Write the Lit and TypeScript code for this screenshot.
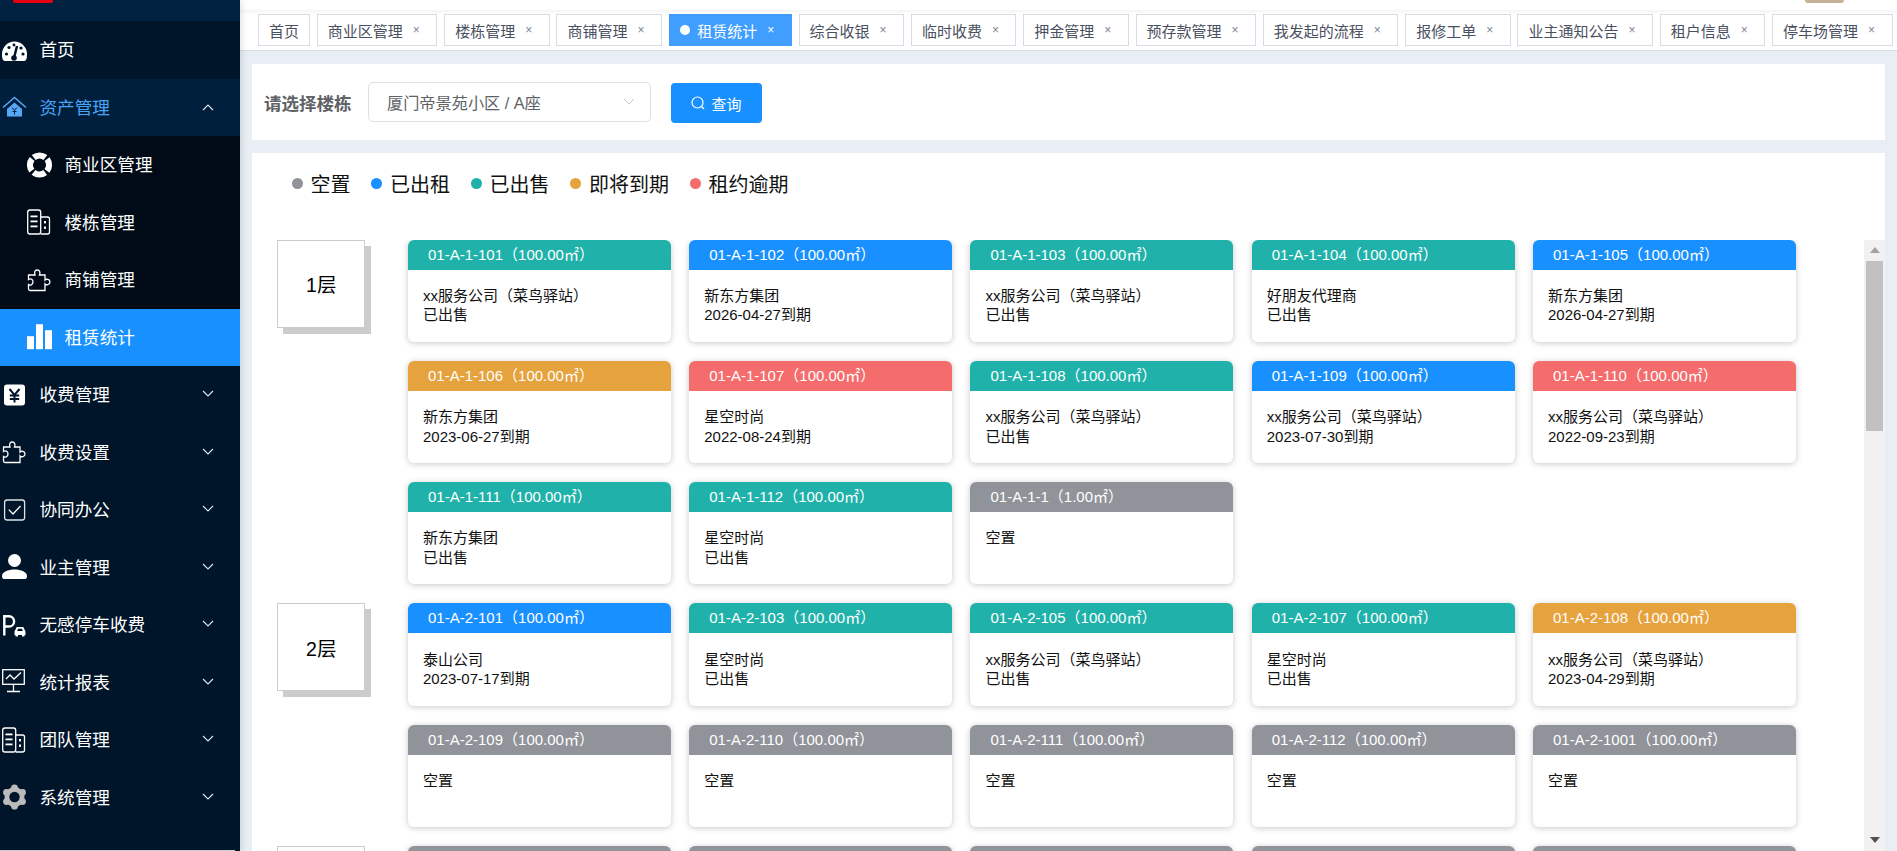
import { LitElement, html, css } from "lit";
import { customElement } from "lit/decorators.js";

const XX = "xx服务公司（菜鸟驿站）";
type C = [string, string, string, string?, string?];
const f1: C[] = [
  ["t", "01-A-1-101", "100.00", XX, "已出售"],
  ["b", "01-A-1-102", "100.00", "新东方集团", "2026-04-27到期"],
  ["t", "01-A-1-103", "100.00", XX, "已出售"],
  ["t", "01-A-1-104", "100.00", "好朋友代理商", "已出售"],
  ["b", "01-A-1-105", "100.00", "新东方集团", "2026-04-27到期"],
  ["o", "01-A-1-106", "100.00", "新东方集团", "2023-06-27到期"],
  ["r", "01-A-1-107", "100.00", "星空时尚", "2022-08-24到期"],
  ["t", "01-A-1-108", "100.00", XX, "已出售"],
  ["b", "01-A-1-109", "100.00", XX, "2023-07-30到期"],
  ["r", "01-A-1-110", "100.00", XX, "2022-09-23到期"],
  ["t", "01-A-1-111", "100.00", "新东方集团", "已出售"],
  ["t", "01-A-1-112", "100.00", "星空时尚", "已出售"],
  ["g", "01-A-1-1", "1.00", "空置"],
];
const f2: C[] = [
  ["b", "01-A-2-101", "100.00", "泰山公司", "2023-07-17到期"],
  ["t", "01-A-2-103", "100.00", "星空时尚", "已出售"],
  ["t", "01-A-2-105", "100.00", XX, "已出售"],
  ["t", "01-A-2-107", "100.00", "星空时尚", "已出售"],
  ["o", "01-A-2-108", "100.00", XX, "2023-04-29到期"],
  ["g", "01-A-2-109", "100.00", "空置"],
  ["g", "01-A-2-110", "100.00", "空置"],
  ["g", "01-A-2-111", "100.00", "空置"],
  ["g", "01-A-2-112", "100.00", "空置"],
  ["g", "01-A-2-1001", "100.00", "空置"],
];
const tabs = ["商业区管理", "楼栋管理", "商铺管理", "租赁统计", "综合收银", "临时收费", "押金管理", "预存款管理", "我发起的流程", "报修工单", "业主通知公告", "租户信息", "停车场管理"];
const legend: [string, string][] = [["g", "空置"], ["b", "已出租"], ["t", "已出售"], ["o", "即将到期"], ["r", "租约逾期"]];

const icons: Record<string, unknown> = {
  home: html`<svg class="ico" viewBox="0 0 30 30" width="30" height="30"><path fill="#fff" d="M5 26C3 26 2 24 2 19A12.5 12.5 0 0 1 27 19C27 24 26 26 24 26Z"/><path stroke="#001529" stroke-width="2.4" fill="none" d="M14 23L17 11"/><circle cx="14" cy="23" r="2.8" fill="#001529"/><g fill="#001529"><circle cx="6.5" cy="19" r="1.6"/><circle cx="9" cy="12.5" r="1.6"/><circle cx="14" cy="10" r="1.4"/><circle cx="21" cy="13" r="1.6"/><circle cx="23" cy="19" r="1.6"/></g></svg>`,
  house: html`<svg class="ico" viewBox="0 0 30 30" width="30" height="30"><path d="M3 15.5L14.5 5.5L26 15.5" fill="none" stroke="#58a8f5" stroke-width="1.5"/><path d="M7 17L14.5 10.5L22 17V24.6H7Z" fill="#58a8f5"/><path d="M12.2 15.5L14.5 18.5L16.8 15.5M14.5 18.5V22.5M12.5 19.5H16.5" fill="none" stroke="#001f3c" stroke-width="1"/></svg>`,
  ring: html`<svg class="ico" viewBox="0 0 30 30" width="30" height="30"><circle cx="14.5" cy="15" r="9.5" fill="none" stroke="#fff" stroke-width="6.2" stroke-dasharray="12.4 2.5" stroke-dashoffset="-1.25" transform="rotate(-135 14.5 15)"/></svg>`,
  building: html`<svg class="ico" viewBox="0 0 30 30" width="30" height="30"><g fill="none" stroke="#fff" stroke-width="1.3"><rect x="2.7" y="3" width="13" height="24" rx="2.2"/><path d="M15.7 10H22.5A2 2 0 0 1 24.5 12V25A2 2 0 0 1 22.5 27H15.7"/></g><g fill="#fff"><rect x="5.5" y="8.5" width="7" height="1.8"/><rect x="5.5" y="13.5" width="7" height="1.8"/><rect x="5.5" y="18.5" width="7" height="1.8"/><rect x="19" y="14" width="2" height="2.4"/><rect x="19" y="19.5" width="2" height="2.4"/></g></svg>`,
  puzzle: html`<svg class="ico" viewBox="0 0 30 30" width="30" height="30"><path fill="none" stroke="#fff" stroke-width="1.3" d="M3.5 10H10C9.2 8 9.5 5 12.2 5C15 5 15.4 8 14.5 10H20V15C21 13.8 25 13.8 25 17C25 20.2 21 20.2 20 19V25.5H5A1.5 1.5 0 0 1 3.5 24V19.5C5 20.6 8 20 8 17C8 14 5 13.4 3.5 14.5Z"/></svg>`,
  bars: html`<svg class="ico" viewBox="0 0 30 30" width="30" height="30"><g fill="#fff"><rect x="2" y="14.2" width="7" height="13"/><rect x="11" y="2.2" width="7" height="25"/><rect x="20" y="8.2" width="7" height="19"/></g></svg>`,
  yen: html`<svg class="ico" viewBox="0 0 30 30" width="30" height="30"><rect x="4" y="4.6" width="21" height="21" rx="3" fill="#fff"/><path d="M9.5 9L14.5 15L19.5 9M14.5 15V22.5M9.8 15.5H19.2M9.8 19H19.2" fill="none" stroke="#001529" stroke-width="2"/></svg>`,
  check: html`<svg class="ico" viewBox="0 0 30 30" width="30" height="30"><rect x="4.6" y="5" width="20" height="20" rx="2.5" fill="none" stroke="#dfe3e8" stroke-width="1.3"/><path d="M8.8 14.6L13 19L20.5 11" fill="none" stroke="#fff" stroke-width="1.3"/></svg>`,
  user: html`<svg class="ico" viewBox="0 0 30 30" width="30" height="30"><circle cx="14.5" cy="8.5" r="6.5" fill="#fff"/><path d="M2 24C2 20 8 17.5 14.5 17.5C21 17.5 27 20 27 24C27 26.5 26 27 24 27H5C3 27 2 26.5 2 24Z" fill="#fff"/></svg>`,
  park: html`<svg class="ico" viewBox="0 0 30 30" width="30" height="30"><path d="M4.3 25.5V6.3H9A5 5 0 0 1 9 16.5H4.3" fill="none" stroke="#fff" stroke-width="2.4"/><path d="M14.5 21.5L16.7 17H23.3L25.5 21.5V25H24.5V26.5H22V25H18V26.5H15.5V25H14.5Z" fill="#fff"/><path d="M17.2 21L18 18.8H22L22.8 21Z" fill="#001529"/></svg>`,
  chart: html`<svg class="ico" viewBox="0 0 30 30" width="30" height="30"><g fill="none" stroke="#fff" stroke-width="1.3"><rect x="2.7" y="2.7" width="21.6" height="14.6"/><path d="M6 12L10 8L14 12L21 5.5M13.5 17.5V24.4M7 24.5H20"/></g></svg>`,
  gear: html`<svg class="ico" viewBox="0 0 30 30" width="30" height="30"><g fill="#bbb"><circle cx="14.5" cy="15" r="10"/><circle cx="14.5" cy="5.8" r="3.4"/><circle cx="14.5" cy="24.2" r="3.4"/><circle cx="6.5" cy="10.4" r="3.4"/><circle cx="22.5" cy="10.4" r="3.4"/><circle cx="6.5" cy="19.6" r="3.4"/><circle cx="22.5" cy="19.6" r="3.4"/></g><circle cx="14.5" cy="15" r="5.2" fill="#001529"/></svg>`,
};

const chev = (up: boolean) => html`<svg class="chev" viewBox="0 0 12 8" width="12" height="8"><path d="${up ? "M1 7L6 2L11 7" : "M1 1L6 6L11 1"}" fill="none" stroke="#e0e6ee" stroke-width="1.1"/></svg>`;

@customElement("app-root")
export class AppRoot extends LitElement {
  static styles = css`
    :host { display: block; height: 851px; overflow: hidden; font-family: "Liberation Sans", "Noto Sans CJK SC", sans-serif; color: #000; text-spacing-trim: space-all; }
    * { box-sizing: border-box; }
    .shell { display: flex; height: 851px; }
    .side { width: 240px; flex: none; background: #001529; position: relative; z-index: 2; display: flex; flex-direction: column; box-shadow: 2px 0 6px rgba(0,21,41,.12); }
    .logo { height: 21px; background: #002140; flex: none; padding-left: 13px; }
    .logo i { display: block; width: 40px; height: 3px; background: #e60012; border-radius: 0 0 2px 2px; }
    .mi { height: 57.5px; flex: none; display: flex; align-items: center; color: #fff; font-size: 17.6px; position: relative; }
    .mi span { margin-top: -2px; }
    .ico { flex: none; display: block; margin-right: 9.5px; }
    .chev { position: absolute; left: 201.5px; top: 24px; }
    .open { background: #001f3c; color: #4ba3f8; }
    .sub { background: #000b17; padding-left: 25px; }
    .sel { background: #1890ff; padding-left: 25px; }
    .spacer { flex: 1; }
    .edge { height: 1px; width: 235px; background: #c9ccd1; flex: none; }
    .main { flex: 1; min-width: 0; display: flex; flex-direction: column; background: #e9edf4; }
    .nav { height: 10px; flex: none; background: #fff; display: flex; justify-content: flex-end; padding-right: 53px; box-shadow: 0 1px 4px rgba(0,21,41,.08); position: relative; z-index: 1; }
    .avatar { width: 39px; height: 2.5px; background: #c5b398; border-radius: 0 0 10px 10px; }
    .tags { height: 41px; flex: none; background: #fff; border-bottom: 1px solid #d8dce5; display: flex; gap: 6.8px; padding: 4px 0 0 18px; align-items: flex-start; }
    .tab { height: 32px; display: flex; align-items: center; border: 1px solid #d8dce5; padding: 0 10px; font-size: 15px; color: #495060; white-space: nowrap; background: #fff; }
    .tab .x { width: 16px; margin: 0 2px 0 5.5px; text-align: center; font-size: 12px; color: #7d8593; }
    .tab.on { background: #409eff; border-color: #409eff; color: #fff; }
    .tab.on .x { color: #fff; }
    .tab.on .d { width: 10px; height: 10px; border-radius: 50%; background: #fff; margin-right: 7.5px; }
    .content { flex: 1; min-height: 0; padding: 13px 12px 0; display: flex; flex-direction: column; gap: 13px; }
    .filter { height: 76px; flex: none; background: #fff; display: flex; align-items: center; padding-left: 12px; }
    .flabel { font-size: 17.5px; font-weight: 700; color: #606266; width: 103.5px; white-space: nowrap; }
    .select { width: 283px; height: 40px; border: 1px solid #dcdfe6; border-radius: 5px; display: flex; align-items: center; justify-content: space-between; padding: 0 15px 0 18.5px; font-size: 16.2px; color: #606266; }
    .btn { margin: 2px 0 0 20.5px; width: 91px; height: 40px; border-radius: 4px; background: #1890ff; color: #fff; display: flex; align-items: center; justify-content: center; gap: 6px; font-size: 15px; }
    .panel { flex: 1; min-height: 0; background: #fff; display: flex; flex-direction: column; }
    .legend { height: 86.6px; flex: none; display: flex; align-items: center; padding: 0 0 25px 39.5px; gap: 20.5px; font-size: 20px; color: #111; }
    .li { display: flex; align-items: center; gap: 8px; }
    .li i { display: block; width: 11px; height: 11px; border-radius: 50%; }
    .g { background: #909399; } .b { background: #1890ff; } .t { background: #20b2aa; } .o { background: #e6a23c; } .r { background: #f56c6c; }
    .scrollwrap { flex: 1; min-height: 0; display: flex; }
    .floors { flex: 1; min-width: 0; overflow: hidden; padding: 0 0 10px 25.3px; display: flex; flex-direction: column; gap: 19px; }
    .floor { display: flex; align-items: flex-start; flex: none; }
    .fbox { width: 88px; height: 88px; flex: none; border: 1px solid #ccc; box-shadow: 6px 6px 0 #ccc; background: #fff; display: flex; align-items: center; justify-content: center; font-size: 19.5px; margin-right: 42.7px; }
    .grid { display: grid; grid-template-columns: repeat(5, 263px); column-gap: 18.25px; row-gap: 19px; }
    .card { height: 102.25px; background: #fff; border-radius: 6px; box-shadow: 0 1px 6px rgba(0,0,0,.22); overflow: hidden; }
    .card .h { height: 30px; line-height: 29px; padding-left: 20px; color: #fff; font-size: 15px; white-space: nowrap; }
    .card .bd { padding: 16.2px 0 0 15px; font-size: 15px; line-height: 19.6px; color: #111; }
    .sb { width: 21px; flex: none; background: #f1f1f1; display: flex; flex-direction: column; align-items: center; height: 611px; }
    .sb .up, .sb .dn { height: 21px; flex: none; display: flex; align-items: center; justify-content: center; width: 100%; }
    .thumb { width: 17px; height: 170px; background: #c1c1c1; flex: none; }
    .sb .gapf { flex: 1; }
  `;

  card(c: C) {
    return html`<div class="card"><div class="h ${c[0]}">${c[1]}（${c[2]}㎡）</div><div class="bd">${c[3]}<br />${c[4]}</div></div>`;
  }

  floor(n: string, cards: C[]) {
    return html`<div class="floor"><div class="fbox">${n}</div><div class="grid">${cards.map((c) => this.card(c))}</div></div>`;
  }

  item(icon: string, label: string, cls = "", arrow: "up" | "down" | "" = "down") {
    return html`<div class="mi ${cls}">${icons[icon]}<span>${label}</span>${arrow ? chev(arrow === "up") : ""}</div>`;
  }

  render() {
    return html`<div class="shell">
      <aside class="side">
        <div class="logo"><i></i></div>
        ${this.item("home", "首页", "", "")}
        ${this.item("house", "资产管理", "open", "up")}
        ${this.item("ring", "商业区管理", "sub", "")}
        ${this.item("building", "楼栋管理", "sub", "")}
        ${this.item("puzzle", "商铺管理", "sub", "")}
        ${this.item("bars", "租赁统计", "sel", "")}
        ${this.item("yen", "收费管理")}
        ${this.item("puzzle", "收费设置")}
        ${this.item("check", "协同办公")}
        ${this.item("user", "业主管理")}
        ${this.item("park", "无感停车收费")}
        ${this.item("chart", "统计报表")}
        ${this.item("building", "团队管理")}
        ${this.item("gear", "系统管理")}
        <div class="spacer"></div>
        <div class="edge"></div>
      </aside>
      <div class="main">
        <div class="nav"><div class="avatar"></div></div>
        <div class="tags">
          <div class="tab">首页</div>
          ${tabs.map((t) => html`<div class="tab ${t === "租赁统计" ? "on" : ""}">${t === "租赁统计" ? html`<span class="d"></span>` : ""}${t}<span class="x">×</span></div>`)}
        </div>
        <div class="content">
          <div class="filter">
            <div class="flabel">请选择楼栋</div>
            <div class="select"><span>厦门帝景苑小区 / A座</span><svg viewBox="0 0 12 8" width="12" height="8"><path d="M1 1L6 6L11 1" fill="none" stroke="#c0c4cc" stroke-width="1"/></svg></div>
            <div class="btn"><svg viewBox="0 0 14 14" width="14" height="14"><circle cx="6.5" cy="6.5" r="5.5" fill="none" stroke="#fff" stroke-width="1.2"/><path d="M10.5 10.5L13 13" stroke="#fff" stroke-width="1.2"/></svg><span>查询</span></div>
          </div>
          <div class="panel">
            <div class="legend">${legend.map((l) => html`<div class="li"><i class="${l[0]}"></i><span>${l[1]}</span></div>`)}</div>
            <div class="scrollwrap">
              <div class="floors">
                ${this.floor("1层", f1)}
                ${this.floor("2层", f2)}
                <div class="floor"><div class="fbox"></div><div class="grid">${[0, 1, 2, 3, 4].map(() => html`<div class="card"><div class="h g"></div></div>`)}</div></div>
              </div>
              <div class="sb">
                <div class="up"><svg viewBox="0 0 10 6" width="10" height="6"><path d="M0 6L5 0L10 6Z" fill="#a3a3a3"/></svg></div>
                <div class="thumb"></div>
                <div class="gapf"></div>
                <div class="dn"><svg viewBox="0 0 10 6" width="10" height="6"><path d="M0 0L5 6L10 0Z" fill="#505050"/></svg></div>
              </div>
            </div>
          </div>
        </div>
      </div>
    </div>`;
  }
}
